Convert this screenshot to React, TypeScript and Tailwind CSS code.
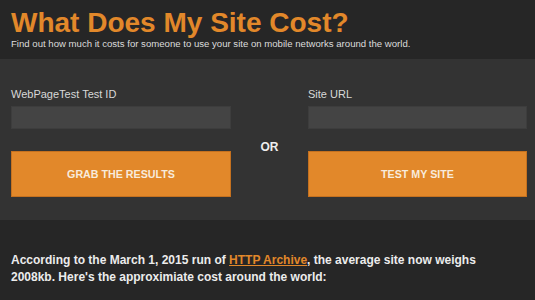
export default function App() {
    return (
        <div className="min-h-screen bg-[#262626] font-['Liberation_Sans',Arial,sans-serif]">
            <div className="h-[59px] px-[11px] pt-[9px]">
                <h1 className="text-[28px] leading-none font-bold text-[#e2882a]">
                    What Does My Site Cost?
                </h1>
                <p className="mt-[2px] text-[9.6px] leading-none text-[#dcdcdc]">
                    Find out how much it costs for someone to use your site on mobile networks around the world.
                </p>
            </div>

            <div className="bg-[#333333] pl-[11px] pr-[8px] pt-[29px] pb-[23px] flex flex-row">
                <div className="w-[220px] flex flex-col">
                    <label className="text-[11px] leading-[13px] text-[#d8d8d8]">WebPageTest Test ID</label>
                    <input type="text" className="mt-[5px] h-[23px] bg-[#444444] border border-[#3d3d3d] outline-none" />
                    <button className="mt-[22px] h-[46px] bg-[#e2882a] border border-[#c5711f] text-[10.7px] font-bold text-[#f8ebdc]">
                        GRAB THE RESULTS
                    </button>
                </div>
                <div className="w-[77px] flex justify-center pt-[53px]">
                    <p className="text-[12px] leading-none font-bold text-[#eeeeee]">OR</p>
                </div>
                <div className="w-[219px] flex flex-col">
                    <label className="text-[11px] leading-[13px] text-[#d8d8d8]">Site URL</label>
                    <input type="text" className="mt-[5px] h-[23px] bg-[#444444] border border-[#3d3d3d] outline-none" />
                    <button className="mt-[22px] h-[46px] bg-[#e2882a] border border-[#c5711f] text-[10.7px] font-bold text-[#f8ebdc]">
                        TEST MY SITE
                    </button>
                </div>
            </div>

            <div className="px-[11px] pt-[32px]">
                <p className="max-w-[490px] text-[12px] leading-[17px] font-bold text-[#ececec]">
                    According to the March 1, 2015 run of{" "}
                    <a href="#" className="text-[#e2882a] underline">HTTP Archive</a>, the average site now weighs 2008kb. Here's the approximiate cost around the world:
                </p>
            </div>
        </div>
    )
}
